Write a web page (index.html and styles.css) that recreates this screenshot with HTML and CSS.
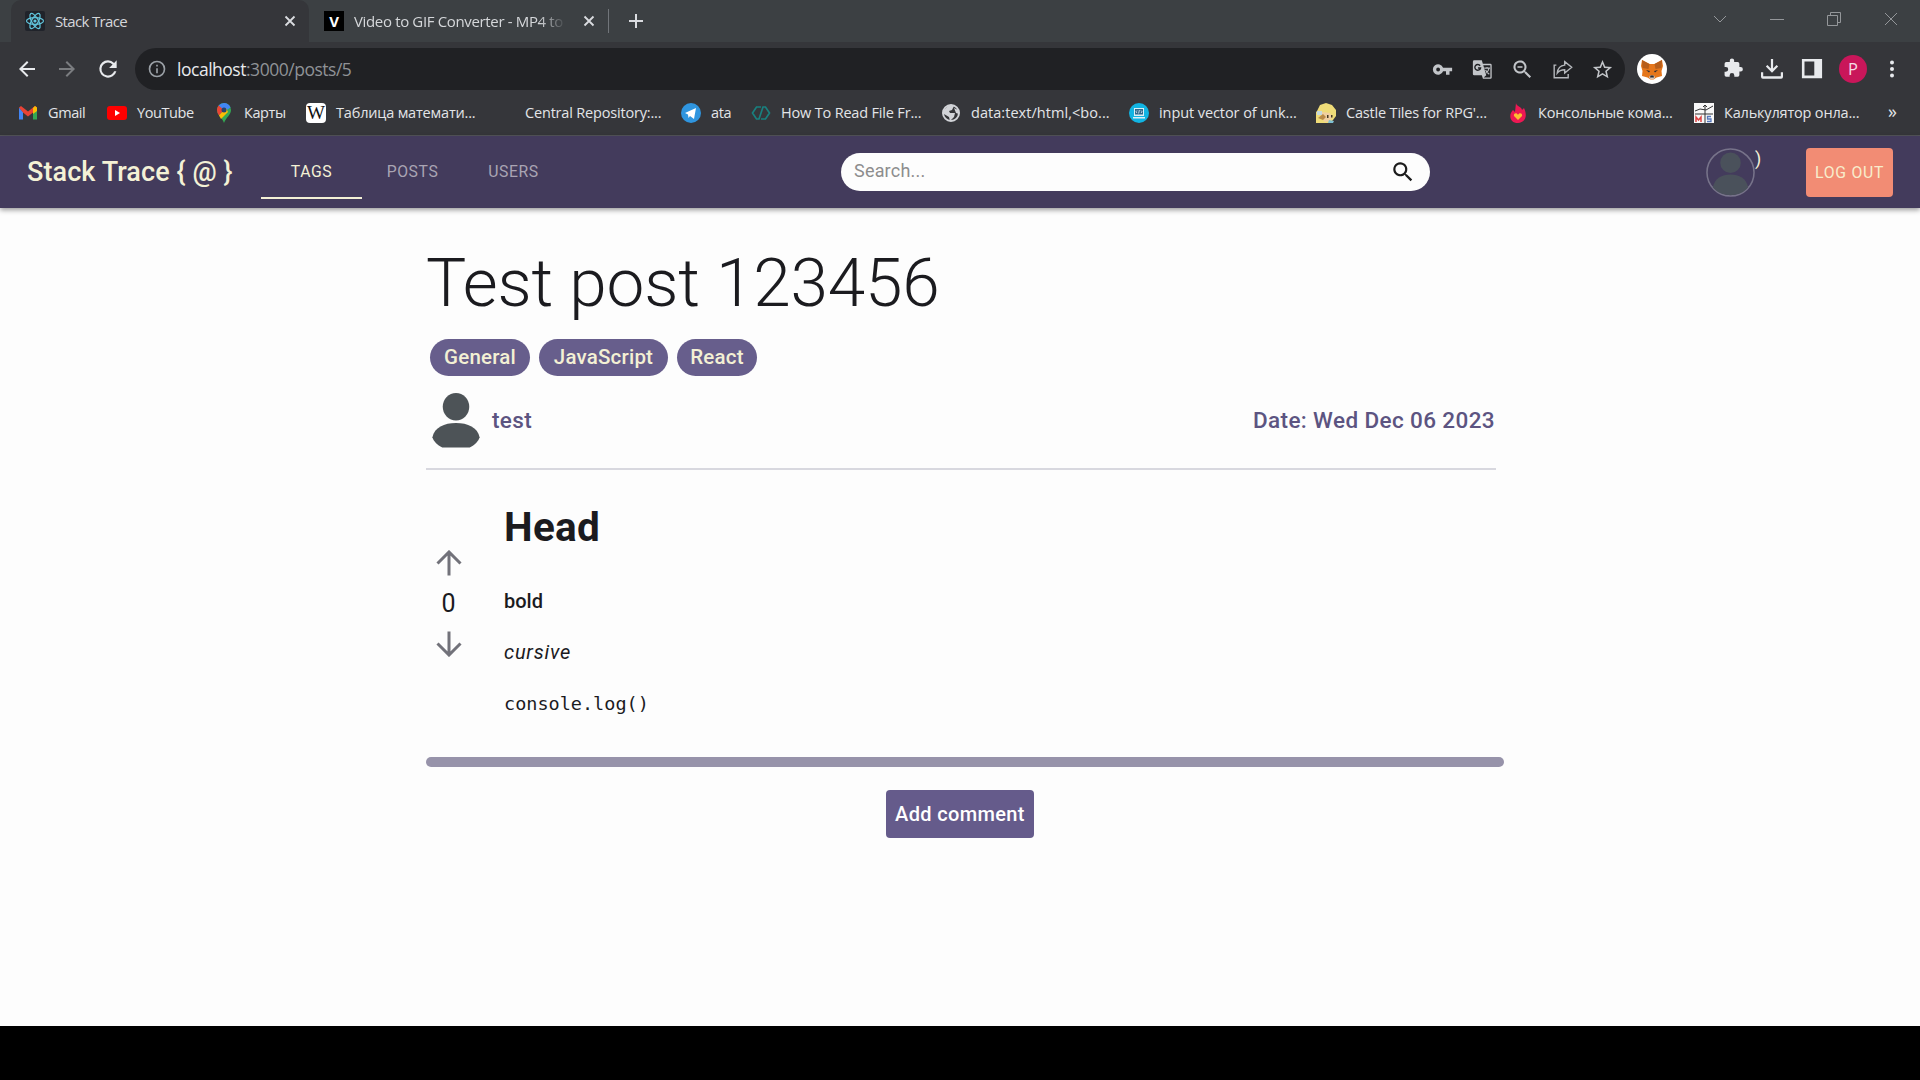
FILE: index.html
```html
<!DOCTYPE html>
<html lang="en">
<head>
<meta charset="utf-8">
<title>Stack Trace</title>
<link rel="stylesheet" href="styles.css">
</head>
<body>
<div class="tabstrip">
  <div class="tab active">
    <svg class="fav" viewBox="0 0 20 20"><rect width="20" height="20" rx="2" fill="#20232a"/><g fill="none" stroke="#61c5dc" stroke-width="1.2"><ellipse cx="10" cy="10" rx="8.5" ry="3.3"/><ellipse cx="10" cy="10" rx="8.5" ry="3.3" transform="rotate(60 10 10)"/><ellipse cx="10" cy="10" rx="8.5" ry="3.3" transform="rotate(120 10 10)"/></g><circle cx="10" cy="10" r="1.6" fill="#61c5dc"/></svg>
    <span class="tab-title first">Stack Trace</span>
    <svg class="x" viewBox="0 0 12 12"><path d="M1.5 1.5l9 9m0-9l-9 9"/></svg>
  </div>
  <div class="tab">
    <span class="fav vfav">V</span>
    <span class="tab-title second">Video to GIF Converter - MP4 to</span>
    <svg class="x" viewBox="0 0 12 12"><path d="M1.5 1.5l9 9m0-9l-9 9"/></svg>
  </div>
  <i class="tab-sep"></i>
  <svg class="plus" viewBox="0 0 16 16"><path d="M8 1v14M1 8h14"/></svg>
  <div class="winbtns">
    <svg viewBox="0 0 14 14"><path d="M1 4l6 6 6-6"/></svg>
    <svg viewBox="0 0 14 14"><path d="M0 7.500h14"/></svg>
    <svg viewBox="0 0 14 14"><path d="M.5 3.500h10v10H.5zM3.500 3V.5h10v10H11"/></svg>
    <svg viewBox="0 0 14 14"><path d="M1 1l12 12m0-12L1 13"/></svg>
  </div>
</div>
<div class="toolbar">
  <svg class="nav" viewBox="0 0 24 24"><path d="M20 11H7.830l5.590-5.590L12 4l-8 8 8 8 1.410-1.410L7.830 13H20z"/></svg>
  <svg class="nav dim" viewBox="0 0 24 24"><path d="M4 11h12.170l-5.590-5.590L12 4l8 8-8 8-1.410-1.410L16.170 13H4z"/></svg>
  <svg class="nav reload" viewBox="0 0 24 24"><path d="M17.650 6.350A7.960 7.960 0 0 0 12 4a8 8 0 1 0 7.730 10h-2.080A6 6 0 1 1 12 6c1.660 0 3.140.69 4.220 1.780L13 11h7V4z"/></svg>
  <div class="omnibox">
    <svg class="ic info" viewBox="0 0 24 24"><path d="M11 7h2v2h-2zm0 4h2v6h-2zm1-9a10 10 0 1 0 0 20 10 10 0 0 0 0-20zm0 18a8 8 0 1 1 0-16 8 8 0 0 1 0 16z"/></svg>
    <span class="url">localhost<span>:3000/posts/5</span></span>
    <div class="omni-icons">
      <svg class="ic" viewBox="0 0 24 24"><path d="M12.650 10A6 6 0 1 0 12.650 14H16v4h4v-4h3v-4zM7 14.200a2.200 2.200 0 1 1 0-4.400 2.200 2.200 0 0 1 0 4.400z"/></svg>
      <svg class="ic" viewBox="0 0 24 24"><path d="M2.500 1.500h8.700l1.200 4H21A1.500 1.500 0 0 1 22.500 7v14a1.500 1.500 0 0 1-1.500 1.500h-8.500l-1.300-4H2.500A1.500 1.500 0 0 1 1 17V3a1.500 1.500 0 0 1 1.500-1.500zM12.900 7l3.400 11.500-3 2.700H21V7z"/><path d="M9.300 7.700A3.300 3.300 0 1 0 9.800 10.300H6.800" fill="none" stroke="#202124" stroke-width="1.600"/><path d="M14 10.500h6.500m-3.300-1.500v1.500m2.300 0c-.5 3-2 4.500-3.500 5.500m-.5-3.500c1 2 2.500 3.700 4.300 5" fill="none" stroke="#b9bcc0" stroke-width="1.300"/></svg>
      <svg class="ic" viewBox="0 0 24 24"><path d="M15.500 14h-.79l-.28-.27A6.500 6.500 0 1 0 13.730 14.430l.27.28v.79l5 5L20.490 19zm-6 0a4.500 4.500 0 1 1 0-9 4.500 4.500 0 0 1 0 9zM7 8.800h5v1.500H7z" transform="translate(-1.800 -1.800) scale(1.150)"/></svg>
      <svg class="ic line" viewBox="0 0 24 24"><path d="M5 7H2.500v14.500h16V17M14.500 3l8 6.500-8 6.500v-3.700c-4 0-6.500 1-8.500 3.700.5-4.500 3.500-8.500 8.500-9z"/></svg>
      <svg class="ic" viewBox="0 0 24 24"><path d="M22 9.240l-7.190-.62L12 2 9.190 8.630 2 9.240l5.460 4.730L5.820 21 12 17.270 18.180 21l-1.630-7.030zM12 15.400l-3.760 2.270 1-4.280-3.320-2.880 4.380-.38L12 6.100l1.710 4.040 4.380.38-3.320 2.880 1 4.280z" transform="translate(-1.200 -1) scale(1.100)"/></svg>
    </div>
  </div>
  <svg class="fox" viewBox="0 0 30 30"><circle cx="15" cy="15" r="15" fill="#fff"/><path d="M5 6l7.500 4h5L25 6l1 6-1.500 5 .5 5-5.500 1.500-3 2h-3l-3-2L5 22l.500-5L4 12z" fill="#e5761b"/><path d="M5 6l7.500 4-1 5-6-1zm20 0l-7.500 4 1 5 6-1z" fill="#b75e1b"/><path d="M12 23.500l1-2h4l1 2-1.500 1.500h-3z" fill="#d8c8bb"/><path d="M13.500 21.500h3l.5 2h-4zM9 16l4 1-1 1.500zm12 0l-4 1 1 1.500z" fill="#292c35"/></svg>
  <div class="exts">
    <svg class="ext" viewBox="0 0 24 24"><path transform="translate(2 -.5) scale(.95)" d="M20.500 11H19V7a2 2 0 0 0-2-2h-4V3.500a2.500 2.500 0 0 0-5 0V5H4a2 2 0 0 0-1.990 2v3.800H3.500a2.700 2.700 0 0 1 0 5.400H2V20a2 2 0 0 0 2 2h3.800v-1.500a2.700 2.700 0 0 1 5.400 0V22H17a2 2 0 0 0 2-2v-4h1.500a2.500 2.500 0 0 0 0-5z"/></svg>
    <svg class="ext" viewBox="0 0 24 24"><path d="M10.800 1h2.400v10.500L17 7.700l1.700 1.700L12 16 5.300 9.400 7 7.700l3.800 3.800zM0 15.500h2.400V20h19.200v-4.500H24v5a2 2 0 0 1-2 2H2a2 2 0 0 1-2-2z"/></svg>
    <svg class="ext" viewBox="0 0 24 24"><path d="M1 1h22v21H1zm2.800 2.800v15.400h10.700V3.800z"/></svg>
  </div>
  <span class="profile">P</span>
  <svg class="dots" viewBox="0 0 6 18"><circle cx="3" cy="2.500" r="2"/><circle cx="3" cy="9" r="2"/><circle cx="3" cy="15.500" r="2"/></svg>
</div>
<div class="bookmarks">
  <div class="bm b1"><svg viewBox="0 0 20 20"><path d="M1 4.500v12h4V9z" fill="#4285f4"/><path d="M15 9v7.500h4v-12z" fill="#34a853"/><path d="M1 4.500L3 3l7 5.500L17 3l2 1.500-4 5-5 4-5-4z" fill="#ea4335"/><path d="M15 5l2-2 2 1.500V8l-4 3z" fill="#fbbc04"/></svg><span>Gmail</span></div>
  <div class="bm b2"><svg viewBox="0 0 20 20"><rect y="3" width="20" height="14" rx="3" fill="#f00"/><path d="M8 7l5 3-5 3z" fill="#fff"/></svg><span>YouTube</span></div>
  <div class="bm b3"><svg viewBox="0 0 20 20"><path d="M10 0a7 7 0 0 0-7 7c0 5 5 7 7 13 2-6 7-8 7-13a7 7 0 0 0-7-7z" fill="#34a853"/><path d="M10 0a7 7 0 0 1 6.500 4.500L10 9 4.600 2.500A7 7 0 0 1 10 0z" fill="#4285f4"/><path d="M4.600 2.500L10 7l-5 5.500A9 9 0 0 1 3 7c0-1.700.6-3.300 1.600-4.500z" fill="#ea4335"/><path d="M5 12.500L12 5l2 4-7 7z" fill="#fbbc04"/><circle cx="10" cy="7" r="2.500" fill="#26456d"/></svg><span>Карты</span></div>
  <div class="bm b4"><span class="wiki">W</span><span>Таблица математи...</span></div>
  <div class="bm b5"><span>Central Repository:...</span></div>
  <div class="bm b6"><svg viewBox="0 0 20 20"><circle cx="10" cy="10" r="10" fill="#2f95df"/><path d="M4 10l11-5-2 11-4-3-1.500 2L7 11.500z" fill="#fff"/></svg><span>ata</span></div>
  <div class="bm b7"><svg viewBox="0 0 20 20" fill="none" stroke="#19807f" stroke-width="1.700"><path d="M10 4H5.500l-4 6 4 6H8l4-12h2.500l4 6-4 6H10"/></svg><span>How To Read File Fr...</span></div>
  <div class="bm b8"><svg viewBox="0 0 20 20"><circle cx="10" cy="10" r="8" fill="#333437" stroke="#d1d3d7" stroke-width="2"/><path d="M3 7l5-5 5 1-2 4-3 1 1 2h5l-1 4-4 4-1-4-5-3zM13 5l4 2 1 4-3-1z" fill="#d1d3d7"/></svg><span>data:text/html,&lt;bo...</span></div>
  <div class="bm b9"><svg viewBox="0 0 20 20"><circle cx="10" cy="10" r="10" fill="#11b4e3"/><path d="M5 5h10v8H5zM4 14h12v1.500H4z" fill="#d9eff7"/><path d="M6 6h8v5.500H6z" fill="#31698c"/><path d="M8 7.500L7 8.800l1 1.200m4-2.500l1 1.300-1 1.200m-1.600-3l-.8 3.500" fill="none" stroke="#d9eff7" stroke-width=".8"/></svg><span>input vector of unk...</span></div>
  <div class="bm b10"><svg viewBox="0 0 20 20"><path d="M1 8l3-6 6-2 6 2 4 5v6l-3 4-3 3H0V9z" fill="#efdc78"/><path d="M6 9l8 1 2 4-2 4-5 1-4-4z" fill="#f0cfa0"/><path d="M1 8h5v4H1z" fill="#c5d9dc"/><path d="M2 15l5-4 3 3-3 3z" fill="#b98a48"/><path d="M11 12h1.500v3H11zm4 0h1.500v2.500H15z" fill="#443824"/><path d="M13 17l5 1-1 2h-5z" fill="#7fbfd2"/></svg><span>Castle Tiles for RPG'...</span></div>
  <div class="bm b11"><svg viewBox="0 0 20 20"><path d="M8 0c0 3 6 4 6 7l2-2c3 6 3 14-6 15C2 20 0 12 5 7l2 2z" fill="#ed1853"/><path d="M10 17l-4-4c-1-3 3-4 4-1 1-3 5-2 4 1z" fill="#fdbd30"/></svg><span>Консольные кома...</span></div>
  <div class="bm b12"><svg viewBox="0 0 20 20"><rect width="20" height="20" fill="#f8f8f8"/><path d="M1 8l5-2 6 1 7-4M11 2v18M1 11h18M9 4l2-2 2 2" fill="none" stroke="#333" stroke-width="1"/><path d="M2 19v-5l2.500 3L7 14v5" fill="none" stroke="#d44" stroke-width="1.500"/><path d="M17 13.500h-3.500v2.500h3.500v2.500h-4" fill="none" stroke="#57b" stroke-width="1.300"/></svg><span>Калькулятор онла...</span></div>
  <span class="more">»</span>
</div>
<header class="appbar">
  <div class="brand">Stack Trace { @ }</div>
  <nav class="tabs"><a class="on">TAGS</a><a>POSTS</a><a>USERS</a></nav>
  <div class="search"><span>Search...</span><svg viewBox="0 0 24 24"><path d="M15.500 14h-.79l-.28-.27A6.500 6.500 0 1 0 13.730 14.430l.27.28v.79l5 4.990L20.490 19zm-6 0a4.500 4.500 0 1 1 0-9 4.500 4.500 0 0 1 0 9z"/></svg></div>
  <div class="user"><svg viewBox="0 0 50 50"><circle cx="25" cy="25" r="24" fill="#433b5c" stroke="#77738a" stroke-width="1.600"/><circle cx="25" cy="15" r="10.500" fill="#4a515b"/><path d="M7 40c2-9 9-13 18-13s16 4 18 13c-4 5-10 8-18 8S11 45 7 40z" fill="#4a515b"/></svg><span>)</span></div>
  <button class="logout">LOG OUT</button>
</header>
<main>
  <article>
    <h1>Test post 123456</h1>
    <div class="chips"><span class="c1">General</span><span class="c2">JavaScript</span><span class="c3">React</span></div>
    <div class="meta">
      <svg viewBox="0 0 48 56"><ellipse cx="24" cy="14" rx="13.500" ry="14"/><path d="M0 45c2-10 12-14.500 24-14.500S46 35 48 45c-1 4-5 8-10 10.500H10C5 53 1 49 0 45z"/></svg>
      <span class="author">test</span><span class="date">Date: Wed Dec 06 2023</span>
    </div>
    <div class="body">
      <div class="votes">
        <svg viewBox="0 0 26 26"><path d="M13 25.500V2M1.500 13.500L13 2l11.500 11.500"/></svg>
        <span>0</span>
        <svg viewBox="0 0 26 26"><path d="M13 .5V24M1.500 12.500L13 24l11.500-11.500"/></svg>
      </div>
      <div class="content"><h2>Head</h2><p><b>bold</b></p><p><i>cursive</i></p><p><code>console.log()</code></p></div>
    </div>
    <div class="bar"></div>
  </article>
  <button class="add">Add comment</button>
</main>
</body>
</html>
```
FILE: styles.css
```css
* { box-sizing: border-box; }
body { margin: 0; height: 1080px; overflow: hidden; background: #000; font-family: Roboto, sans-serif; color: #1b1b1f; display: flex; flex-direction: column; }
svg { display: block; flex: none; }
button { border: 0; padding: 0; font-family: inherit; }

/* browser tabs */
.tabstrip { height: 42px; background: #3c4043; display: flex; align-items: center; font: 15px/20px "Open Sans", sans-serif; color: #d5d7da; white-space: nowrap; flex: none; }
.tab { height: 42px; display: flex; align-items: center; width: 298px; padding-left: 14px; }
.tab.active { margin-left: 11px; background: #35363a; border-radius: 10px 10px 0 0; }
.fav { width: 20px; height: 20px; }
.vfav { background: #000; color: #fff; font-weight: 700; text-align: center; }
.tab-title { margin: -1px 0 0 10px; width: 220px; overflow: hidden; }
.tab-title.first { letter-spacing: -.65px; }
.tab-title.second { width: 210px; letter-spacing: -.35px; -webkit-mask-image: linear-gradient(90deg, #000 185px, transparent 212px); }
.x { width: 12px; height: 12px; margin-left: 9px; fill: none; stroke: #dadce0; stroke-width: 1.800; }
.tab:not(.active) .x { margin-left: 19px; }
.tab:not(.active) { padding-left: 15px; width: 299px; }
.tab-sep { width: 1px; height: 24px; background: #71757a; }
.plus { width: 16px; height: 16px; margin-left: 19px; fill: none; stroke: #dadce0; stroke-width: 2; }
.winbtns { display: flex; gap: 43px; margin: -4px 22px 0 auto; }
.winbtns svg { width: 14px; height: 14px; fill: none; stroke: #94979a; }

/* address row */
.toolbar { height: 54px; background: #35363a; display: flex; align-items: center; padding-left: 15px; flex: none; }
.nav { width: 24px; height: 24px; margin-right: 16px; fill: #e8eaed; }
.nav.dim { fill: #7b7d80; }
.nav.reload { width: 26px; height: 26px; margin-right: 14px; }
.omnibox { width: 1490px; height: 42px; border-radius: 21px; background: #202124; display: flex; align-items: center; padding: 0 12px 0 12px; }
.ic { width: 21px; height: 21px; fill: #c2c5c9; }
.ic.line { fill: none; stroke: #b5b8bc; stroke-width: 1.600; }
.info { width: 20px; height: 20px; fill: #9aa0a6; }
.url { font: 17.500px/24px "Open Sans", sans-serif; letter-spacing: -.48px; color: #e8eaed; margin-left: 10px; }
.url span { color: #8f9296; }
.omni-icons { margin-left: auto; display: flex; gap: 19px; }
.fox { width: 30px; height: 30px; margin-left: 12px; }
.exts { display: flex; gap: 18px; margin-left: 54px; }
.ext { width: 22px; height: 22px; fill: #e8eaed; }
.profile { width: 28px; height: 28px; border-radius: 50%; background: #c9165a; color: #f4dce5; font: 16.500px/28px "Open Sans", sans-serif; text-align: center; margin-left: 16px; }
.dots { width: 6px; height: 18px; margin-left: 22px; fill: #e8eaed; }

/* bookmarks */
.bookmarks { height: 40px; background: #35363a; border-bottom: 1px solid #54555a; display: flex; align-items: center; padding: 0 0 6px 18px; font: 14.500px/20px "Open Sans", sans-serif; color: #e3e5e8; white-space: nowrap; flex: none; }
.bm { display: flex; align-items: center; gap: 10px; flex: none; letter-spacing: -.18px; }
.bm svg, .wiki { width: 20px; height: 20px; }
.wiki { background: #fff; color: #111; border-radius: 4px; font: 19px/20px "Liberation Serif", serif; letter-spacing: 0; display: flex; justify-content: center; }
.b1 { width: 89px; } .b2 { width: 107px; } .b3 { width: 92px; } .b4 { width: 219px; }
.b1, .b2, .b3, .b6 { letter-spacing: -.4px; }
.b5 { width: 156px; } .b6 { width: 70px; } .b7 { width: 190px; } .b8 { width: 188px; letter-spacing: .05px; }
.b9 { width: 187px; letter-spacing: -.08px; } .b10 { width: 192px; } .b11 { width: 186px; } .b12 { width: 194px; }
.more { font-size: 18px; margin-top: -4px; }

/* application bar */
.appbar { height: 72px; background: #433b5c; box-shadow: 0 2px 5px rgba(0,0,0,.4); display: flex; align-items: center; padding-left: 27px; flex: none; z-index: 1; color: #f4f1d6; }
.brand { width: 234px; font-size: 27px; font-weight: 500; letter-spacing: .08px; white-space: nowrap; }
.tabs { display: flex; height: 54px; width: 580px; font-size: 15.750px; letter-spacing: .6px; color: #a9a4b3; }
.tabs a { width: 101px; line-height: 53px; text-align: center; }
.tabs .on { color: #f4f1d6; border-bottom: 2px solid #f4f1d6; }
.search { width: 589px; height: 38px; border-radius: 19px; background: #fdfdfd; display: flex; align-items: center; justify-content: space-between; padding: 0 14px 0 13px; color: #8d8d8d; font-size: 18px; letter-spacing: .2px; }
.search span { margin-top: -4px; }
.search svg { width: 26px; height: 26px; fill: #1c1c1c; }
.user { width: 100px; margin-left: 276px; display: flex; }
.user svg { width: 49px; height: 49px; }
.user span { font-size: 18px; line-height: 22px; }
.logout { width: 87px; height: 49px; border-radius: 4px; background: #f28c74; color: #f8eccc; font-size: 15.750px; letter-spacing: .75px; line-height: 47px; }

/* post */
main { height: 818px; flex: none; background: #fdfdfd; display: flex; flex-direction: column; align-items: center; }
article { width: 1078px; margin-left: 10px; padding-top: 31px; }
h1 { margin: 0; font-weight: 300; font-size: 67.500px; line-height: 88px; letter-spacing: -.2px; }
.chips { display: flex; gap: 9px; margin: 12px 0 0 4px; height: 37px; }
.chips span { border-radius: 19px; background: #675e8c; color: #f3f0d4; font-weight: 500; font-size: 20.500px; letter-spacing: .2px; line-height: 37px; text-align: center; }
.c1 { width: 100px; } .c2 { width: 129px; } .c3 { width: 80px; }
.meta { width: 1070px; height: 94px; border-bottom: 2px solid #d8d8df; padding: 17px 1px 0 6px; display: flex; align-items: flex-start; color: #5c5481; font-weight: 500; font-size: 22.500px; line-height: 54px; letter-spacing: .38px; }
.meta svg { width: 48px; height: 55px; fill: #4d5357; }
.author { margin-left: 12px; }
.date { margin-left: auto; }
.body { display: flex; height: 287px; }
.votes { width: 45px; display: flex; flex-direction: column; align-items: center; padding-top: 80px; font-size: 25px; line-height: 55px; }
.votes svg { width: 26px; height: 26px; fill: none; stroke: #72727a; stroke-width: 3; }
.content { padding: 29px 0 0 33px; font-size: 20px; line-height: 30px; }
h2 { margin: 0 0 31px; font-size: 40.500px; line-height: 56px; font-weight: 700; letter-spacing: .3px; }
p { margin: 0 0 20.800px; }
b { font-weight: 500; }
i { letter-spacing: .75px; }
code { font: 18.500px/30px "DejaVu Sans Mono", monospace; }
.bar { height: 10px; border-radius: 5px; background: #9793aa; }
.add { width: 148px; height: 48px; margin-top: 23px; border-radius: 4px; background: #655b8b; color: #fff; font-size: 20px; font-weight: 500; letter-spacing: .35px; line-height: 46px; }
```
